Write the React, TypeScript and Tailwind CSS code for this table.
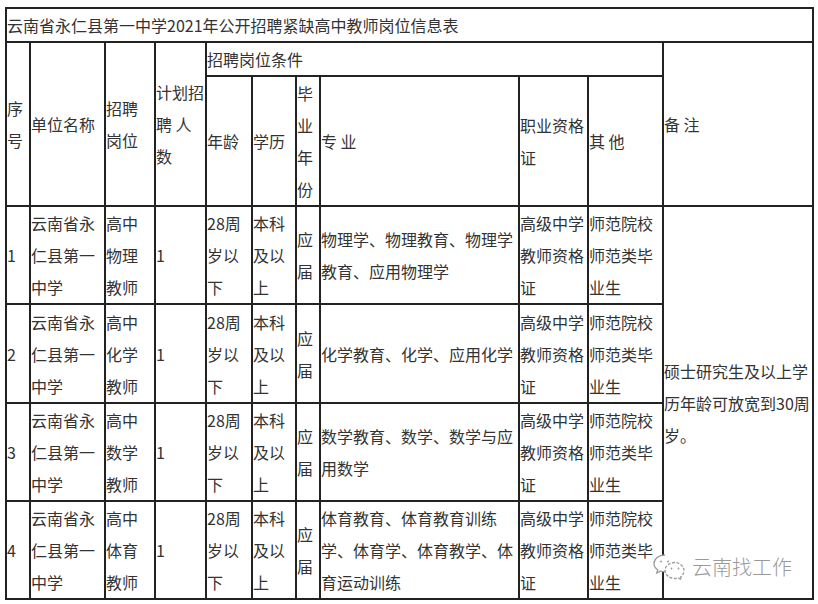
import React from 'react';

type Row = {
  no: string;
  post: string[];
  major: string[];
  height: string;
};

const rows: Row[] = [
  { no: '1', post: ['高中', '物理', '教师'], major: ['物理学、物理教育、物理学', '教育、应用物理学'], height: 'h-[98px]' },
  { no: '2', post: ['高中', '化学', '教师'], major: ['化学教育、化学、应用化学'], height: 'h-[99px]' },
  { no: '3', post: ['高中', '数学', '教师'], major: ['数学教育、数学、数学与应', '用数学'], height: 'h-[97px]' },
  { no: '4', post: ['高中', '体育', '教师'], major: ['体育教育、体育教育训练', '学、体育学、体育教学、体', '育运动训练'], height: 'h-[98px]' },
];

const Lines: React.FC<{ lines: string[] }> = ({ lines }) => (
  <>
    {lines.map((l, i) => (
      <React.Fragment key={i}>
        {i > 0 && <br />}
        {l}
      </React.Fragment>
    ))}
  </>
);

const td = 'border-2 border-[#222] p-0 align-middle text-left whitespace-nowrap';

const WeChatMark = () => (
  <svg width="34" height="28" viewBox="0 0 34 28" fill="none" stroke="#9a9a9a" strokeWidth="1.3">
    <path d="M13 2C6.5 2 2 6 2 10.5c0 2.6 1.4 4.8 3.7 6.3L4.8 20l3.6-1.9c1.4.4 2.9.6 4.6.6" fill="#fff" />
    <circle cx="9" cy="8.5" r="1" fill="#9a9a9a" stroke="none" />
    <circle cx="16" cy="8.5" r="1" fill="#9a9a9a" stroke="none" />
    <path d="M23 9.5c-5.6 0-10 3.6-10 8s4.4 8 10 8c1.2 0 2.3-.2 3.4-.5l3 1.6-.7-2.7c2-1.5 3.3-3.6 3.3-6.4 0-4.4-4.4-8-10-8z" fill="#fff" strokeDasharray="3 1.5" />
    <circle cx="19.5" cy="15.5" r="0.9" fill="#9a9a9a" stroke="none" />
    <circle cx="26.5" cy="15.5" r="0.9" fill="#9a9a9a" stroke="none" />
  </svg>
);

export default function App() {
  return (
    <div className="relative w-[818px] h-[604px] bg-white overflow-hidden font-['Noto_Sans_CJK_SC','Noto_Sans',sans-serif] text-[16px] leading-[32px] text-[#333]">
      <div className="pl-[5px] pt-[7px]">
        <table className="border-collapse table-fixed w-[807px]">
          <colgroup>
            <col className="w-[24px]" />
            <col className="w-[75px]" />
            <col className="w-[50px]" />
            <col className="w-[51px]" />
            <col className="w-[46px]" />
            <col className="w-[44px]" />
            <col className="w-[24px]" />
            <col className="w-[199px]" />
            <col className="w-[69px]" />
            <col className="w-[75px]" />
            <col className="w-[150px]" />
          </colgroup>
          <tbody>
            <tr className="h-[34px]">
              <td className={td} colSpan={11}>云南省永仁县第一中学2021年公开招聘紧缺高中教师岗位信息表</td>
            </tr>
            <tr className="h-[33px]">
              <td className={td} rowSpan={2}><Lines lines={['序', '号']} /></td>
              <td className={td} rowSpan={2}>单位名称</td>
              <td className={td} rowSpan={2}><Lines lines={['招聘', '岗位']} /></td>
              <td className={td} rowSpan={2}><Lines lines={['计划招', '聘 人', '数']} /></td>
              <td className={td} colSpan={6}>招聘岗位条件</td>
              <td className={td} rowSpan={2}>备 注</td>
            </tr>
            <tr className="h-[130px]">
              <td className={td}>年龄</td>
              <td className={td}>学历</td>
              <td className={td}><Lines lines={['毕', '业', '年', '份']} /></td>
              <td className={td}>专 业</td>
              <td className={td}><Lines lines={['职业资格', '证']} /></td>
              <td className={td}>其 他</td>
            </tr>
            {rows.map((r, i) => (
              <tr key={r.no} className={r.height}>
                <td className={td}>{r.no}</td>
                <td className={td}><Lines lines={['云南省永', '仁县第一', '中学']} /></td>
                <td className={td}><Lines lines={r.post} /></td>
                <td className={td}>1</td>
                <td className={td}><Lines lines={['28周', '岁以', '下']} /></td>
                <td className={td}><Lines lines={['本科', '及以', '上']} /></td>
                <td className={td}><Lines lines={['应', '届']} /></td>
                <td className={td}><Lines lines={r.major} /></td>
                <td className={td}><Lines lines={['高级中学', '教师资格', '证']} /></td>
                <td className={td}><Lines lines={['师范院校', '师范类毕', '业生']} /></td>
                {i === 0 && (
                  <td className={td} rowSpan={4}>
                    <Lines lines={['硕士研究生及以上学', '历年龄可放宽到30周', '岁。']} />
                  </td>
                )}
              </tr>
            ))}
          </tbody>
        </table>
      </div>
      <div className="absolute left-[652px] top-[553px] flex items-center gap-[6px]">
        <WeChatMark />
        <span className="text-[20px] leading-[24px] text-[#9a9a9a] font-light tracking-[0px]">云南找工作</span>
      </div>
    </div>
  );
}
